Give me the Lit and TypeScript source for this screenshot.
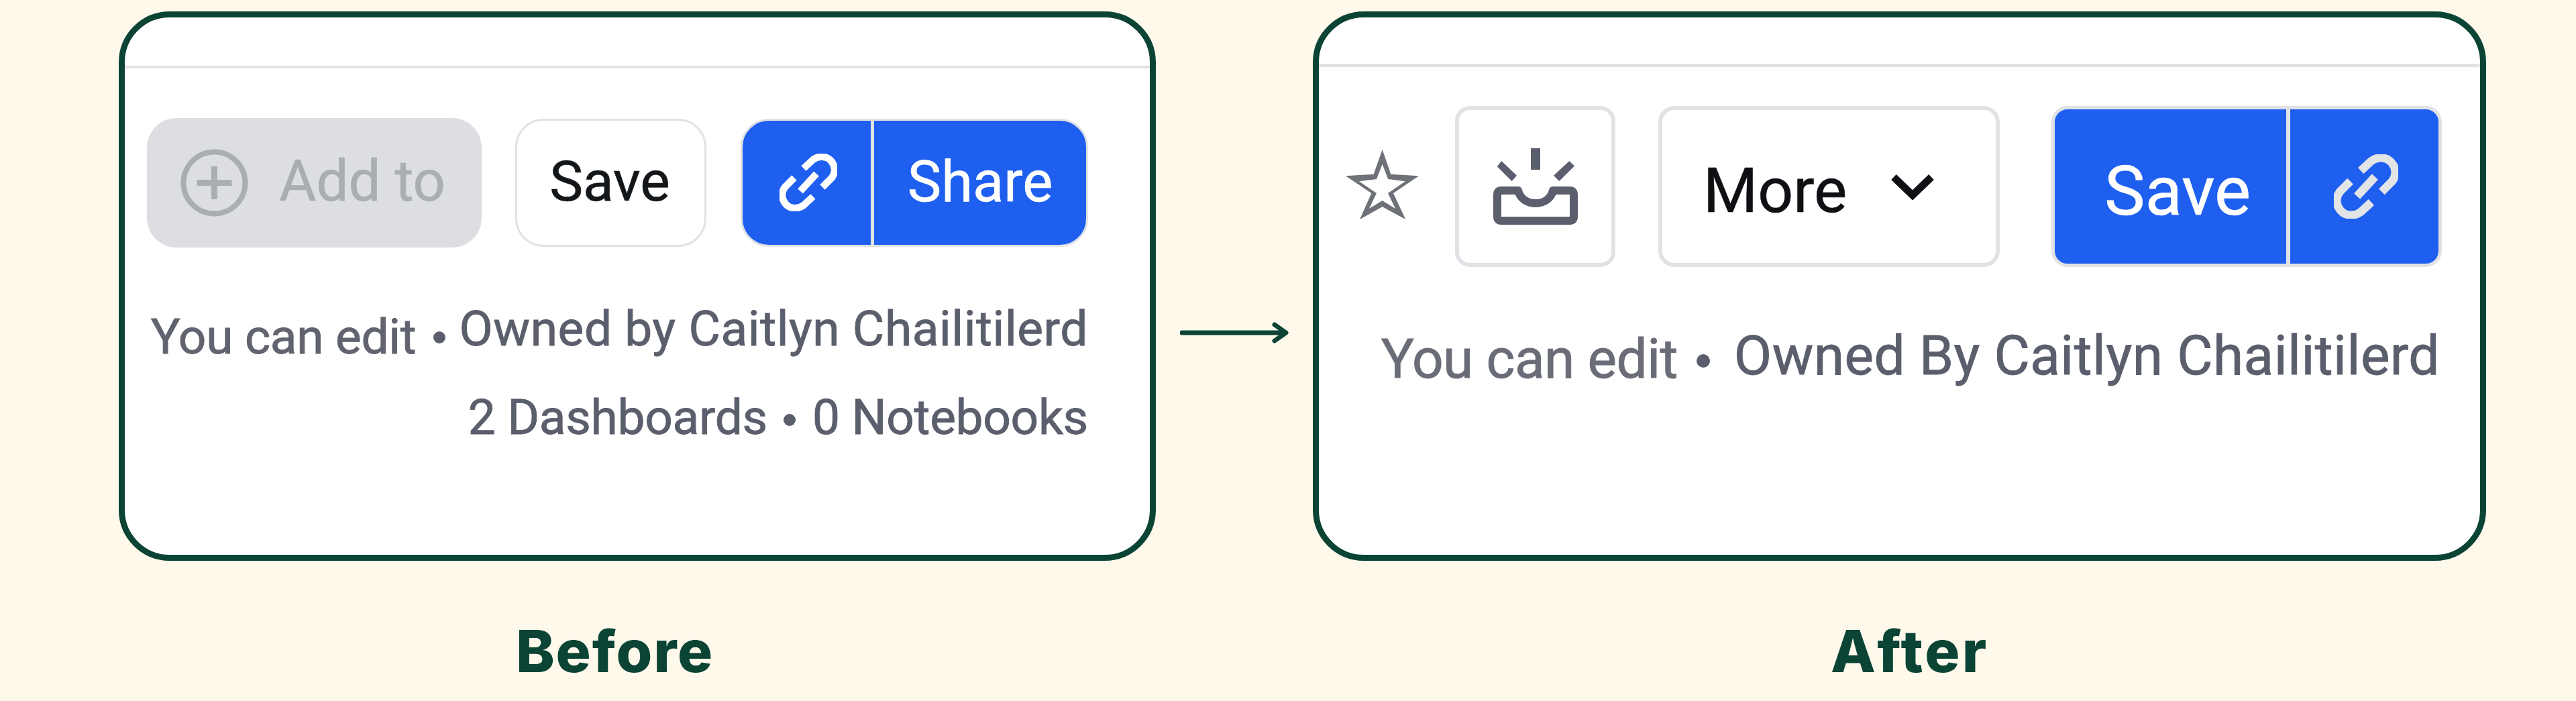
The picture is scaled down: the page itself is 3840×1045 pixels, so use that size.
import { LitElement, html, svg, css } from "lit";
import { customElement } from "lit/decorators.js";

const link = svg`<path d="M36 22 L50 9 C58 3 70 3 77 11 C83 18 84 28 78 36 L64 50"/><path d="M22 36 L8 50 C2 58 3 68 9 75 C16 83 28 83 36 77 L50 64"/><path d="M55 30 L31 56"/>`;

@customElement("app-root")
export class AppRoot extends LitElement {
  static styles = css`
    :host { display: block; width: 3840px; height: 1045px; background: #fff9ec; font-family: Roboto, "Liberation Sans", sans-serif; overflow: hidden; }
    .page { display: flex; align-items: flex-start; padding: 17px 0 0 177px; }
    .arrow-col { width: 234px; display: flex; justify-content: center; padding-top: 463px; }
    .arrow { width: 162px; height: 32px; fill: none; stroke: #0b4434; stroke-width: 7; stroke-linecap: round; stroke-linejoin: round; }
    .card { box-sizing: border-box; height: 819px; background: #fff; border: 9px solid #0b4434; border-radius: 76px; overflow: hidden; }
    .before .card { width: 1546px; }
    .after .card { width: 1749px; }
    .label { margin-top: 85px; font: 800 87px/100px Inter, sans-serif; letter-spacing: 1.8px; color: #0b4434; }
    .before .label { padding-left: 592px; }
    .after .label { padding-left: 772px; letter-spacing: 3.3px; }

    .before .top { height: 72px; border-bottom: 4px solid #e0e2e5; }
    .after .top { height: 69px; border-bottom: 5px solid #e0e2e5; }

    .row { display: flex; align-items: center; }
    .before .row { margin-top: 74px; padding-left: 33px; height: 193px; }
    .after .row { margin-top: 58px; padding-left: 40px; height: 240px; }

    .btn { box-sizing: border-box; display: flex; align-items: center; -webkit-text-stroke: 0.6px currentColor; }
    .add { width: 499px; height: 193px; border-radius: 44px; background: #dcdee1; color: #a9aeb0; font-size: 85px; padding: 0 0 5px 50px; gap: 46px; margin-right: 50px; }
    .add svg { width: 101px; height: 101px; margin-top: 5px; fill: none; stroke: #a9aeb0; stroke-width: 8; }
    .plain { border: 3px solid #e0e2e5; background: #fff; color: #14171a; justify-content: center; }
    .save-l { width: 285px; height: 191px; border-radius: 42px; font-size: 84px; padding-bottom: 5px; margin-right: 51px; padding-right: 3px; }

    .split { box-sizing: border-box; display: flex; overflow: hidden; background: #1f5ff0; color: #fff; }
    .seg { display: flex; align-items: center; justify-content: center; -webkit-text-stroke: 0.6px currentColor; }
    .rule { background: #e0e2e5; }
    .share { width: 518px; height: 191px; border: 3px solid #dfe1e4; border-radius: 42px; }
    .share .seg-a { width: 191px; }
    .share .rule { width: 5px; }
    .share .seg-b { flex: 1; font-size: 85px; padding-bottom: 4px; }
    .lnk { fill: none; stroke-linecap: butt; stroke-linejoin: round; }
    .lnk-w { width: 86px; height: 86px; stroke: #fff; stroke-width: 10.5; margin-left: 4px; margin-top: -2px; }

    .star { width: 110px; height: 105px; margin: 0 53px 6px 0; fill: #6e7178; flex: none; }
    .inbox { width: 239px; height: 240px; border: 6px solid #e0e2e5; border-radius: 22px; justify-content: center; margin-right: 64px; }
    .inbox svg { width: 126px; height: 116px; }
    .inbox path.tray { fill: none; stroke: #5b5e6c; stroke-width: 12; stroke-linejoin: round; }
    .inbox polygon, .inbox rect { fill: #5b5e6c; }
    .more { width: 509px; height: 240px; border: 6px solid #e0e2e5; border-radius: 24px; padding-left: 61px; gap: 66px; color: #0e1013; font-size: 93px; margin-right: 77px; justify-content: flex-start; }
    .more span { padding-top: 12px; }
    .more svg { width: 64px; height: 40px; fill: none; stroke: #0e1013; stroke-width: 11; }
    .saveshare { width: 582px; height: 240px; border: 5px solid #e0e2e5; border-radius: 24px; }
    .saveshare .seg-a { width: 345px; justify-content: flex-start; padding: 14px 0 0 74px; box-sizing: border-box; font-size: 102px; }
    .saveshare .rule { width: 6px; }
    .saveshare .seg-b { flex: 1; }
    .lnk-g { width: 96px; height: 96px; stroke: #e2e4e6; stroke-width: 11; margin-left: 4px; }

    .meta { color: #5b5e6c; display: flex; justify-content: flex-end; white-space: nowrap; -webkit-text-stroke: 0.9px currentColor; }
    .before .meta { font-size: 73px; line-height: 90px; padding-right: 92px; }
    .after .meta { font-size: 82px; line-height: 100px; padding-right: 60px; }
    .m1 { margin-top: 76px; }
    .m2 { margin-top: 30px; }
    .am { margin-top: 82px; }
    .dot { background: #5b5e6c; border-radius: 50%; flex: none; }
    .before .dot { width: 18px; height: 18px; }
    .after .dot { width: 20px; height: 20px; }
    .m1 .you { margin-top: 12px; letter-spacing: -0.3px; color: #61646f; }
    .m1 .dot { margin: 49px 20px 0 26px; }
    .m1 .own { letter-spacing: 0.6px; }
    .m2 .dash { letter-spacing: -0.3px; }
    .m2 .dot { margin: 40px 25px 0 24px; }
    .m2 .note { letter-spacing: -0.3px; }
    .am .you { margin-top: 5px; letter-spacing: -0.55px; color: #6a6d77; }
    .am .dot { margin: 48px 36px 0 28px; }
    .am .own { letter-spacing: 0.45px; }
  `;

  render() {
    return html`<div class="page">
      <section class="before">
        <div class="card">
          <div class="top"></div>
          <div class="row">
            <div class="btn add">
              <svg viewBox="0 0 101 101"><circle cx="50.5" cy="50.5" r="46"/><path d="M24.5 50.5 H76.5 M50.5 26 V75" stroke-width="9"/></svg>
              <span>Add to</span>
            </div>
            <div class="btn plain save-l">Save</div>
            <div class="split share">
              <div class="seg seg-a"><svg class="lnk lnk-w" viewBox="0 0 86 86">${link}</svg></div>
              <div class="rule"></div>
              <div class="seg seg-b">Share</div>
            </div>
          </div>
          <div class="meta m1"><span class="you">You can edit</span><i class="dot"></i><span class="own">Owned by Caitlyn Chailitilerd</span></div>
          <div class="meta m2"><span class="dash">2 Dashboards</span><i class="dot"></i><span class="note">0 Notebooks</span></div>
        </div>
        <div class="label">Before</div>
      </section>

      <div class="arrow-col">
        <svg class="arrow" viewBox="0 0 162 32"><path d="M3 16 H157 M141 4 L158 16 L141 28"/></svg>
      </div>

      <section class="after">
        <div class="card">
          <div class="top"></div>
          <div class="row">
            <svg class="star" viewBox="0 0 110 105"><path fill-rule="evenodd" d="M54.6 0 L67.3 36.7 L109 39.3 L71 65 L89.3 104 L54.6 85.3 L21 104 L38.3 65 L0 39.3 L41.7 36.7 Z M54.6 21.7 L46 44 L20 47.3 L46 65 L35 88 L54.6 76 L74 88 L63 65 L89 47.3 L63.2 44 Z"/></svg>
            <div class="btn inbox">
              <svg viewBox="0 0 126 116">
                <rect x="56" y="1" width="14" height="32"></rect>
                <polygon points="12.3,20 5.7,28.3 27.7,50 35,41.7"></polygon>
                <polygon points="113.3,20 121,27.5 98.3,50 90,41.7"></polygon>
                <path class="tray" d="M37 64 H12 Q6 64 6 70 V103 Q6 109 12 109 H114 Q120 109 120 103 V70 Q120 64 114 64 H89 C86 76 76 83 63 83 C50 83 40 76 37 64 Z"/>
              </svg>
            </div>
            <div class="btn more"><span>More</span><svg viewBox="0 0 64 40"><path d="M4 6 L32 33 L60 6"/></svg></div>
            <div class="split saveshare">
              <div class="seg seg-a">Save</div>
              <div class="rule"></div>
              <div class="seg seg-b"><svg class="lnk lnk-g" viewBox="0 0 86 86">${link}</svg></div>
            </div>
          </div>
          <div class="meta am"><span class="you">You can edit</span><i class="dot"></i><span class="own">Owned By Caitlyn Chailitilerd</span></div>
        </div>
        <div class="label">After</div>
      </section>
    </div>`;
  }
}
